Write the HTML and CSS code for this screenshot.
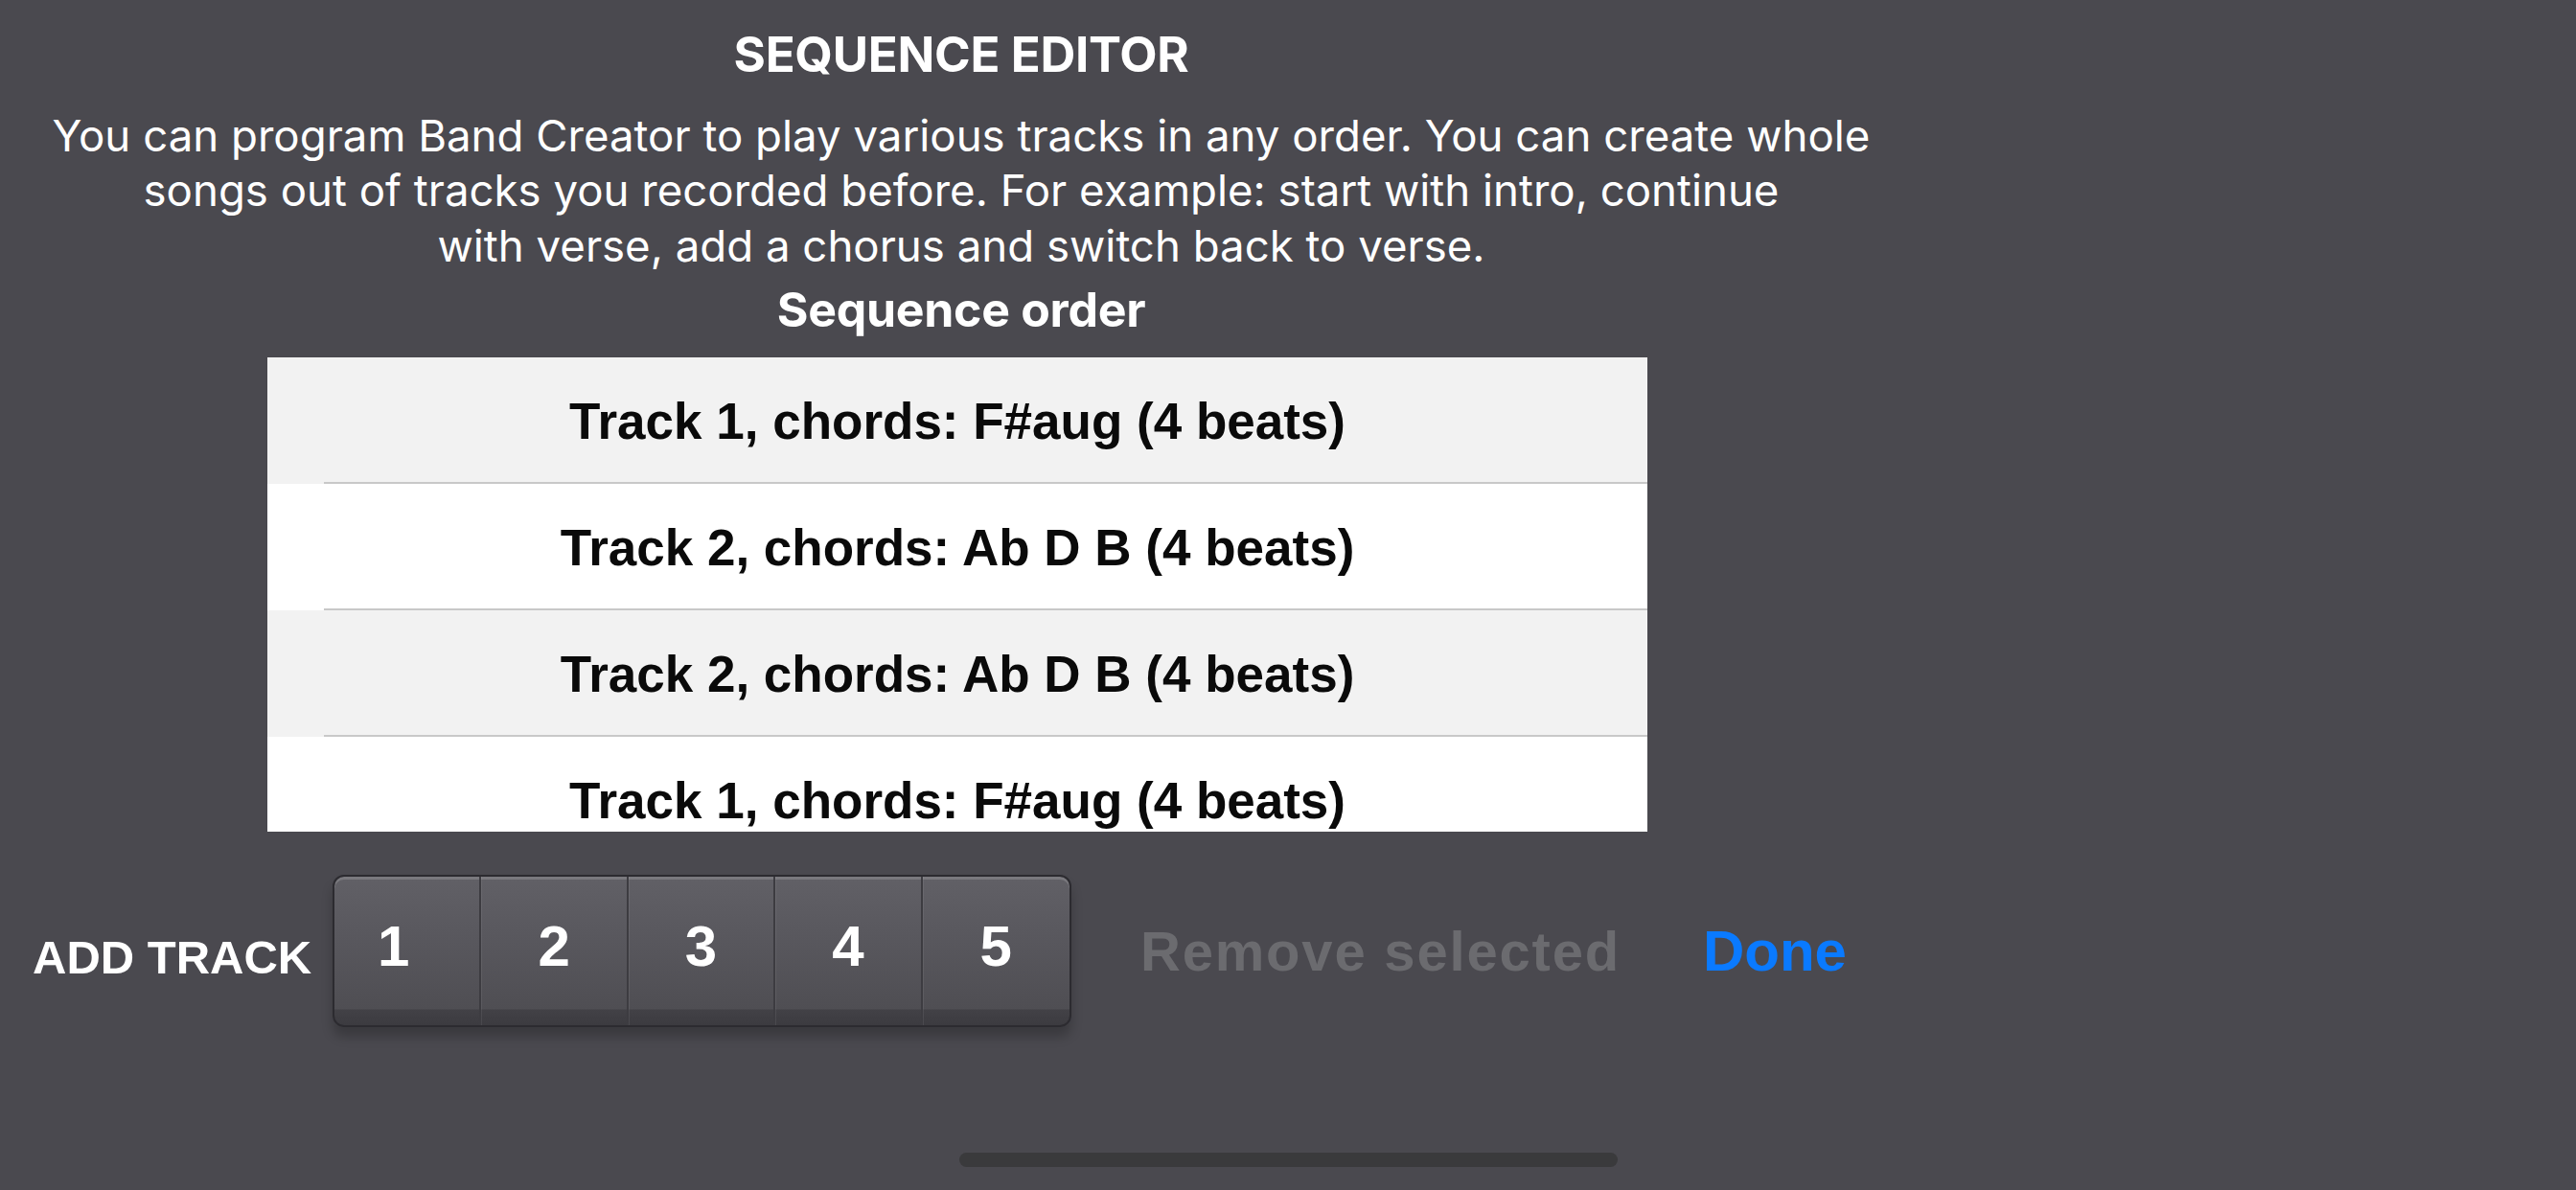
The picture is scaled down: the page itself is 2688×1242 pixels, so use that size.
FILE: index.html
```html
<!DOCTYPE html>
<html lang="en">
<head>
<meta charset="utf-8">
<title>Sequence Editor</title>
<link rel="stylesheet" href="styles.css">
</head>
<body>
<div class="screen">
  <main class="editor">
    <h1 class="title">SEQUENCE EDITOR</h1>
    <p class="intro">You can program Band Creator to play various tracks in any order. You can create whole<br>songs out of tracks you recorded before. For example: start with intro, continue<br>with verse, add a chorus and switch back to verse.</p>
    <h2 class="subtitle">Sequence order</h2>
    <div class="list">
      <div class="row row-shade">Track 1, chords: F#aug (4 beats)</div>
      <div class="row">Track 2, chords: Ab D B (4 beats)</div>
      <div class="row row-shade">Track 2, chords: Ab D B (4 beats)</div>
      <div class="row">Track 1, chords: F#aug (4 beats)</div>
    </div>
    <div class="toolbar">
      <span class="add-label">ADD TRACK</span>
      <div class="segmented">
        <span class="segment seg-first">1</span>
        <span class="segment">2</span>
        <span class="segment">3</span>
        <span class="segment">4</span>
        <span class="segment seg-last">5</span>
      </div>
      <span class="remove">Remove selected</span>
      <span class="done">Done</span>
    </div>
  </main>
  <div class="home-indicator"></div>
</div>
</body>
</html>
```
FILE: styles.css
```css
html, body {
  margin: 0;
  padding: 0;
}
body {
  background: #4a494f;
  font-family: Inter, "Noto Sans", sans-serif;
  color: #ffffff;
}
.screen {
  width: 2688px;
  height: 1242px;
  display: flex;
  flex-direction: column;
  overflow: hidden;
}
.editor {
  width: 2006px;
  display: flex;
  flex-direction: column;
  align-items: center;
}
.title {
  margin: 26px 0 0 0;
  font-size: 51px;
  line-height: 61px;
  font-weight: 700;
  letter-spacing: -0.3px;
}
.intro {
  margin: 26px 0 0 0;
  font-size: 45.6px;
  line-height: 57.4px;
  font-weight: 400;
  text-align: center;
  letter-spacing: 0;
}
.subtitle {
  margin: 9px 0 0 0;
  font-size: 50px;
  line-height: 58px;
  font-weight: 700;
  letter-spacing: -0.3px;
}
.list {
  align-self: flex-start;
  margin: 21px 0 0 279px;
  width: 1440px;
  height: 495px;
  overflow: hidden;
  background: #ffffff;
}
.row {
  height: 132px;
  display: flex;
  align-items: center;
  justify-content: center;
  font-family: "Liberation Sans", Arial, sans-serif;
  font-weight: 700;
  font-size: 53px;
  color: #0a0a0a;
  background:
    linear-gradient(#c8c8c8, #c8c8c8) no-repeat 59px 100% / calc(100% - 59px) 2px,
    #ffffff;
}
.row-shade {
  background:
    linear-gradient(#c8c8c8, #c8c8c8) no-repeat 59px 100% / calc(100% - 59px) 2px,
    #f2f2f2;
}
.toolbar {
  align-self: flex-start;
  margin-top: 45px;
  padding-left: 34px;
  display: flex;
  align-items: center;
  font-family: "Liberation Sans", Arial, sans-serif;
  font-weight: 700;
}
.add-label {
  font-size: 49px;
  color: #ffffff;
  padding-top: 12px;
  width: 313px;
}
.segmented {
  width: 767px;
  height: 155px;
  display: grid;
  grid-template-columns: repeat(5, 1fr);
  border: 2px solid #2c2b30;
  border-radius: 12px;
  background: linear-gradient(to bottom,
    #616066 0px,
    #59585e 60px,
    #4f4e53 138px,
    #424146 139px,
    #3c3b40 155px);
  box-shadow:
    inset 0 3px 0 rgba(255, 255, 255, 0.16),
    0 10px 12px rgba(0, 0, 0, 0.22);
}
.segment {
  display: flex;
  align-items: center;
  justify-content: center;
  padding-bottom: 10px;
  font-size: 60px;
  color: #ffffff;
  border-right: 2px solid #3d3c41;
  box-shadow: 1px 0 0 rgba(255, 255, 255, 0.07);
}
.seg-first {
  padding-right: 28px;
}
.seg-last {
  border-right: 0;
  box-shadow: none;
}
.remove {
  margin-left: 72px;
  font-size: 58px;
  letter-spacing: 1.8px;
  color: #6b6b6f;
}
.done {
  margin-left: 86px;
  font-size: 60px;
  color: #0a7aff;
}
.home-indicator {
  align-self: center;
  margin-top: auto;
  margin-bottom: 24px;
  width: 687px;
  height: 15px;
  border-radius: 8px;
  background: #3a3a3c;
}
```
